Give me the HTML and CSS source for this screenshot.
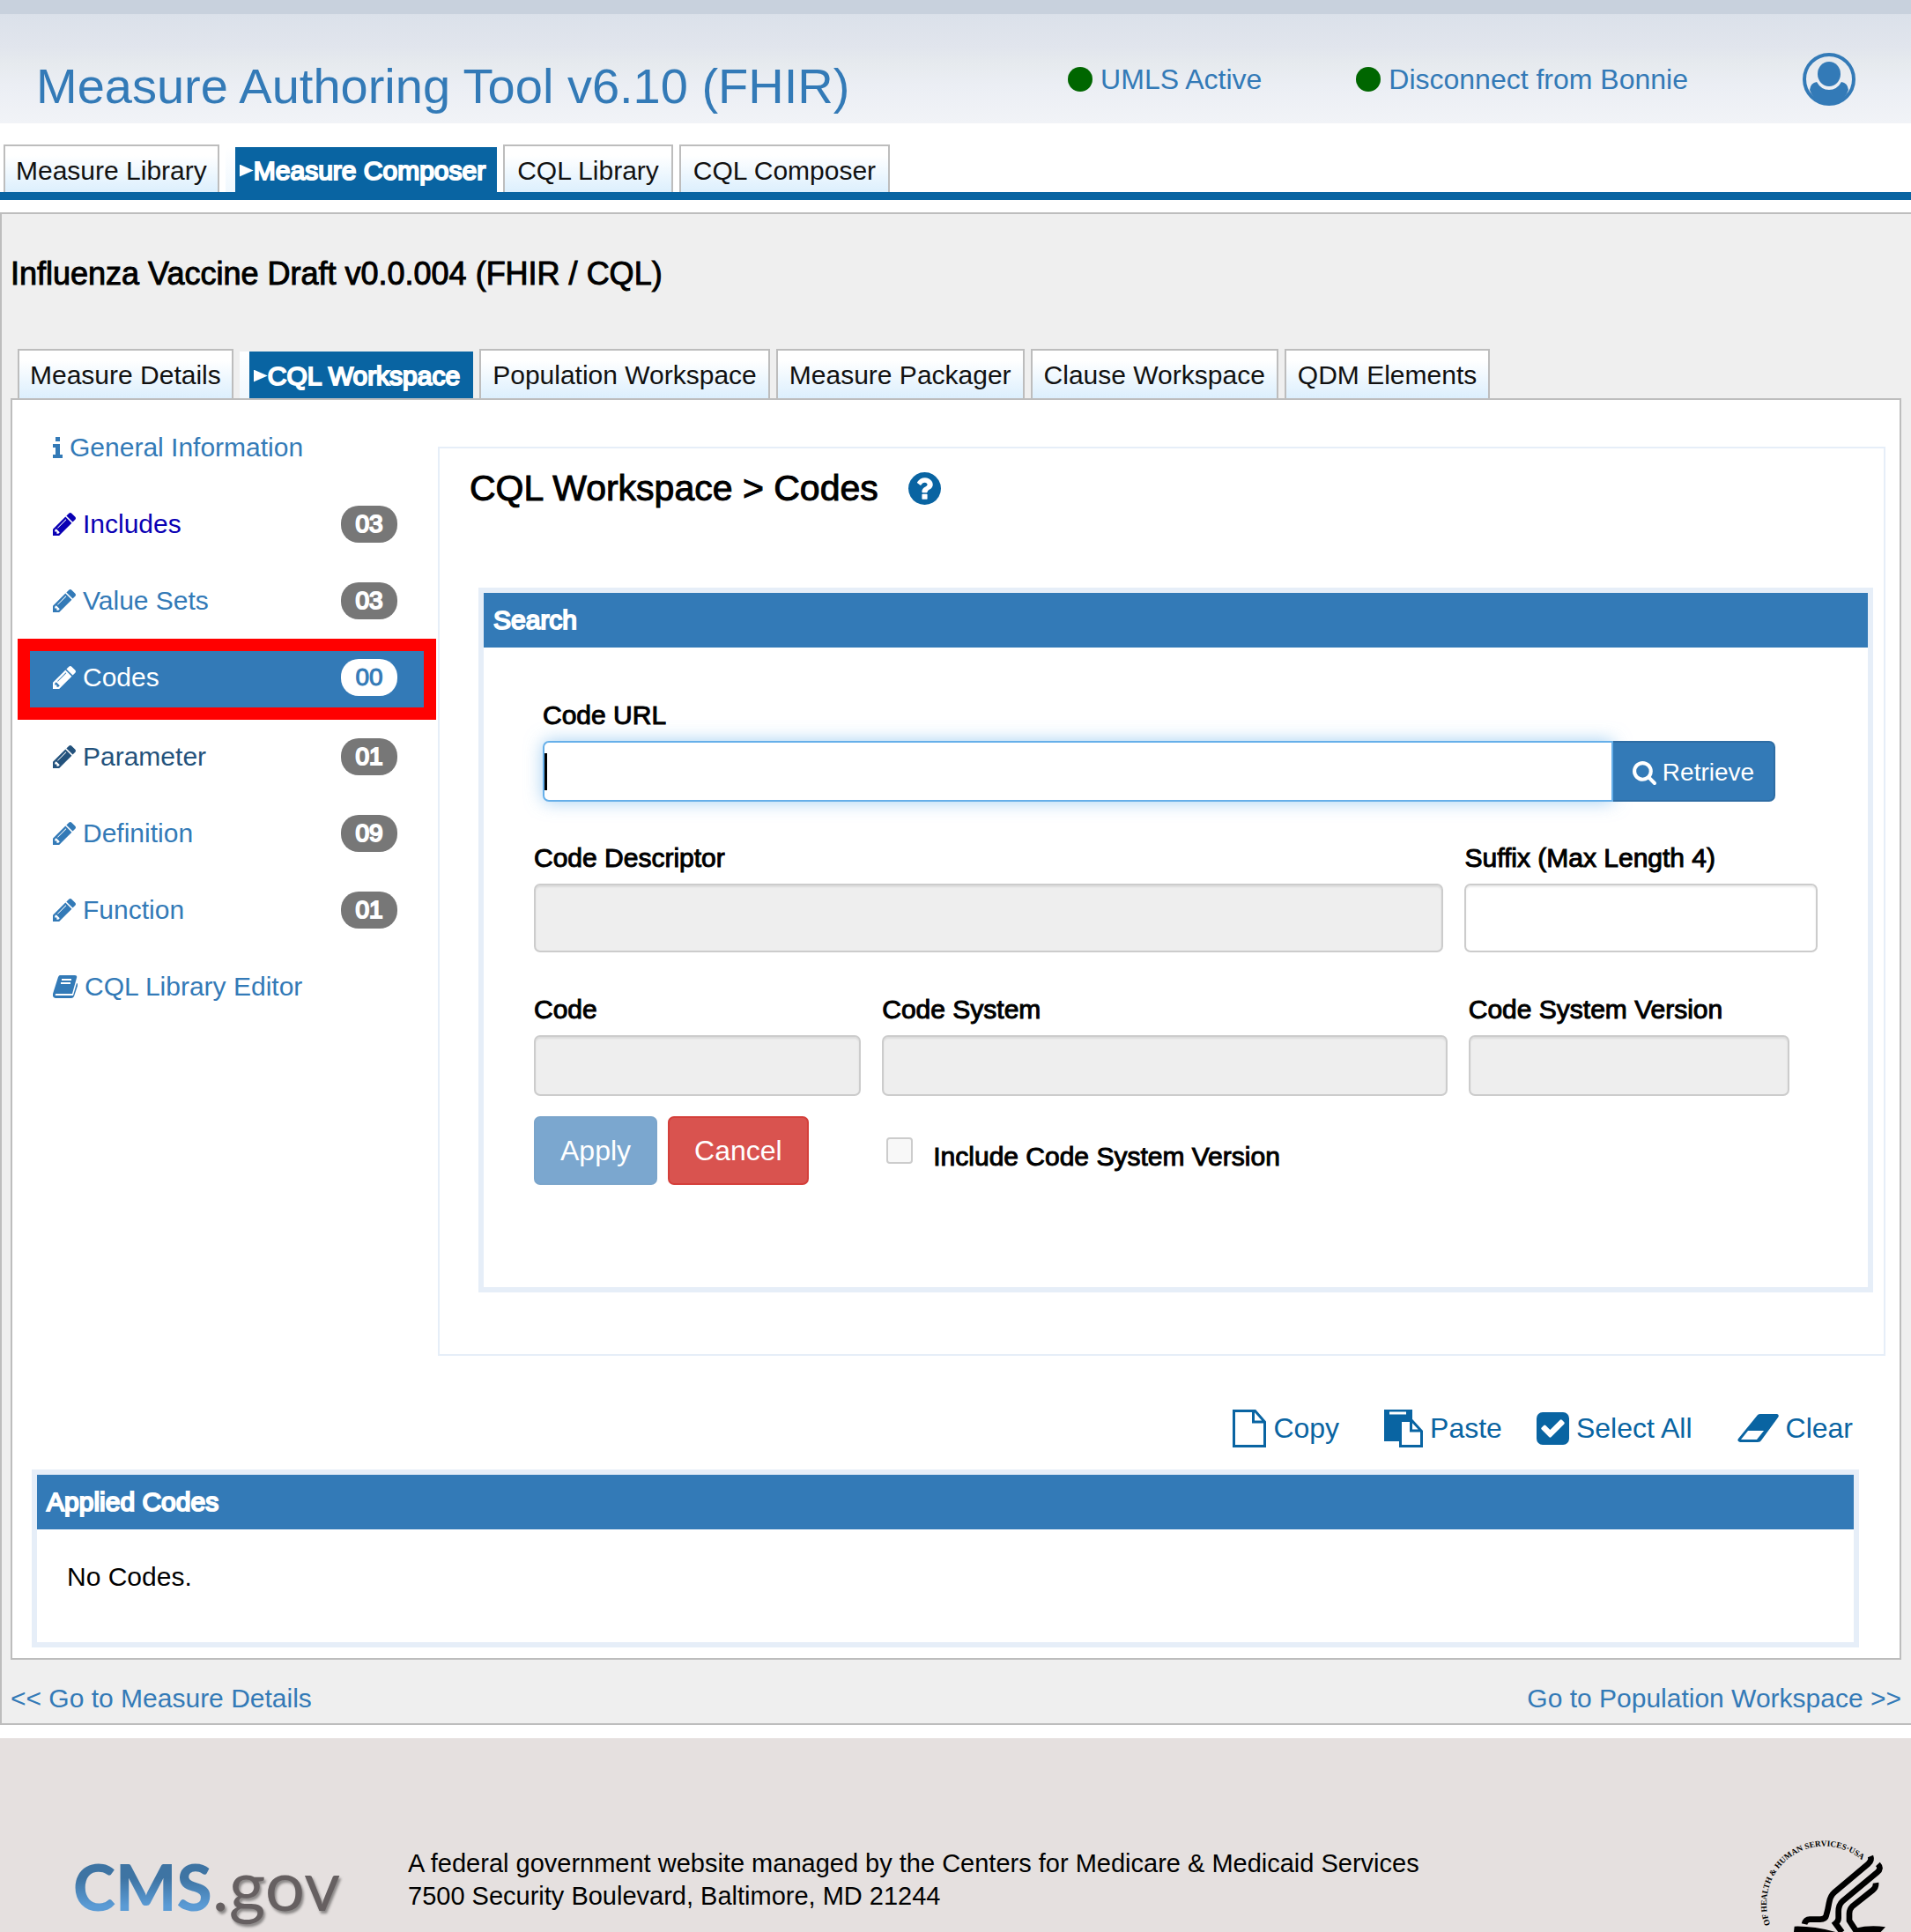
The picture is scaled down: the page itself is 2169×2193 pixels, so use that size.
FILE: index.html
```html
<!DOCTYPE html>
<html lang="en">
<head>
<meta charset="utf-8">
<title>Measure Authoring Tool</title>
<link rel="stylesheet" href="styles.css">
</head>
<body>
<svg class="sprite" aria-hidden="true">
  <symbol id="pencil" viewBox="128 149 1515 1515"><path d="M491 1536l91-91-235-235-91 91v107h128v128h107zm523-928q0-22-22-22-10 0-17 7l-542 542q-7 7-7 17 0 22 22 22 10 0 17-7l542-542q7-7 7-17zm-54-192l416 416-832 832h-416v-416zm683 96q0 53-37 90l-166 166-416-416 166-165q36-38 90-38 53 0 91 38l235 234q37 39 37 91z"/></symbol>
</svg>

<header class="header">
  <h1 class="header-title">Measure Authoring Tool v6.10 (FHIR)</h1>
  <nav class="header-links" aria-label="Account">
    <a class="status" href="#"><span class="dot"></span>UMLS Active</a>
    <a class="status" href="#"><span class="dot"></span>Disconnect from Bonnie</a>
  </nav>
  <a class="avatar" href="#" aria-label="Profile">
    <svg viewBox="0 0 60 60" width="60" height="60"><circle cx="30" cy="30" r="28" fill="none" stroke="currentColor" stroke-width="4"/><ellipse cx="30" cy="24" rx="13" ry="14" fill="currentColor"/><path d="M8 42q1-8 8-9 5 9 14 9t14-9q7 1 8 9-6 16-22 16T8 42z" fill="currentColor"/></svg>
  </a>
</header>

<nav class="tabs tabs-main" aria-label="Main">
  <a class="tab" href="#">Measure Library</a>
  <span class="tab-current"><a class="tab-active" href="#" aria-current="page">Measure Composer</a></span>
  <a class="tab" href="#">CQL Library</a>
  <a class="tab" href="#">CQL Composer</a>
</nav>

<main class="page">
  <h2 class="measure-name">Influenza Vaccine Draft v0.0.004 (FHIR / CQL)</h2>
  <nav class="tabs tabs-sub" aria-label="Measure">
    <a class="tab" href="#">Measure Details</a>
    <span class="tab-current"><a class="tab-active" href="#" aria-current="page">CQL Workspace</a></span>
    <a class="tab" href="#">Population Workspace</a>
    <a class="tab" href="#">Measure Packager</a>
    <a class="tab" href="#">Clause Workspace</a>
    <a class="tab" href="#">QDM Elements</a>
  </nav>

  <div class="workspace">
    <div class="columns">
      <ul class="side">
        <li><a class="side-link" href="#"><svg class="icon-info" viewBox="0 0 11 24" width="11" height="24"><path d="M3 0h5v5H3zM0 8h8v12h3v4H0v-4h3v-8H0z" fill="currentColor"/></svg>General Information</a></li>
        <li><a class="side-link side-link-blue" href="#"><svg class="icon"><use href="#pencil"/></svg>Includes<span class="badge">03</span></a></li>
        <li><a class="side-link" href="#"><svg class="icon"><use href="#pencil"/></svg>Value Sets<span class="badge">03</span></a></li>
        <li class="side-current"><a class="side-link" href="#" aria-current="true"><svg class="icon"><use href="#pencil"/></svg>Codes<span class="badge">00</span></a></li>
        <li><a class="side-link side-link-dark" href="#"><svg class="icon"><use href="#pencil"/></svg>Parameter<span class="badge">01</span></a></li>
        <li><a class="side-link" href="#"><svg class="icon"><use href="#pencil"/></svg>Definition<span class="badge">09</span></a></li>
        <li><a class="side-link" href="#"><svg class="icon"><use href="#pencil"/></svg>Function<span class="badge">01</span></a></li>
        <li><a class="side-link" href="#"><svg class="icon icon-book" viewBox="0 0 28 26"><path d="M8 0h17q3 0 2 3l-5 18H4q-2 0-1 2h20l4-14q2 1 1 3l-4 12q-1 2-3 2H3q-4-1-3-5L6 2q1-2 2-2z" fill="currentColor"/><path d="M10 5h11M9 9h11" stroke="#fff" stroke-width="2"/></svg>CQL Library Editor</a></li>
      </ul>

      <section class="content">
        <h3 class="content-title">CQL Workspace &gt; Codes
          <a class="help" href="#" aria-label="Help"><svg viewBox="128 128 1536 1536" width="37" height="37"><path fill="currentColor" d="M1024 1376v-192q0-14-9-23t-23-9h-192q-14 0-23 9t-9 23v192q0 14 9 23t23 9h192q14 0 23-9t9-23zm256-672q0-88-55.500-163t-138.500-116-170-41q-243 0-371 213-15 24 8 42l132 100q7 6 19 6 16 0 25-12 53-68 86-92 34-24 86-24 48 0 85.500 26t37.500 59q0 38-20 61t-68 45q-63 28-115.500 86.500t-52.500 125.500v36q0 14 9 23t23 9h192q14 0 23-9t9-23q0-19 21.500-49.500t54.500-49.500q32-18 49-28.500t46-35 44.500-48 28-60.500 12.500-81zm384 192q0 209-103 385.500t-279.500 279.500-385.500 103-385.500-103-279.500-279.500-103-385.500 103-385.500 279.500-279.500 385.500-103 385.500 103 279.500 279.500 103 385.500z"/></svg></a>
        </h3>
        <form class="box">
          <h4 class="box-title">Search</h4>
          <div class="form">
            <div class="field field-url">
              <label for="url">Code URL</label>
              <div class="input-group">
                <input class="input input-focus" id="url" type="text"><span class="caret"></span>
                <button class="retrieve" type="button"><svg viewBox="64 128 1664 1664" width="27" height="27"><path fill="currentColor" d="M1216 832q0-185-131.500-316.500t-316.500-131.500-316.500 131.500-131.500 316.500 131.500 316.500 316.500 131.500 316.500-131.500 131.500-316.500zm512 832q0 52-38 90t-90 38q-54 0-90-38l-343-342q-179 124-399 124-143 0-273.500-55.500t-225-150-150-225-55.500-273.500 55.500-273.500 150-225 225-150 273.500-55.500 273.500 55.500 225 150 150 225 55.500 273.500q0 220-124 399l343 343q37 37 37 90z"/></svg>Retrieve</button>
              </div>
            </div>
            <div class="row-descriptor">
              <div class="field"><label for="descriptor">Code Descriptor</label><input class="input input-tall" id="descriptor" type="text" disabled></div>
              <div class="field"><label for="suffix">Suffix (Max Length 4)</label><input class="input input-tall" id="suffix" type="text" maxlength="4"></div>
            </div>
            <div class="row-code">
              <div class="field"><label for="code">Code</label><input class="input" id="code" type="text" disabled></div>
              <div class="field"><label for="system">Code System</label><input class="input" id="system" type="text" disabled></div>
              <div class="field"><label for="version">Code System Version</label><input class="input" id="version" type="text" disabled></div>
              <div class="buttons">
                <button class="btn btn-apply" type="button" disabled>Apply</button>
                <button class="btn btn-cancel" type="button">Cancel</button>
              </div>
              <div class="check">
                <input class="checkbox" id="include" type="checkbox" disabled>
                <label for="include">Include Code System Version</label>
              </div>
            </div>
          </div>
        </form>
      </section>
    </div>

    <div class="tools">
      <a class="tool tool-wide" href="#"><svg viewBox="0 0 38 43" width="38" height="43"><path d="M1.500 1.500h24L36.500 14v27.500h-35zM23.500 1.500V14h13" fill="none" stroke="currentColor" stroke-width="3"/></svg>Copy</a>
      <a class="tool" href="#"><svg viewBox="0 0 44 43" width="44" height="43"><path d="M0 0h32v13l-2-2H17v25H0z" fill="currentColor"/><path d="M6 4h19" stroke="#fff" stroke-width="3"/><path d="M18.500 12.500h13l11 12v17h-24zM30.500 12.500V24h12" fill="#fff" stroke="currentColor" stroke-width="3"/></svg>Paste</a>
      <a class="tool tool-wide" href="#"><svg viewBox="128 128 1536 1536" width="37" height="37"><path fill="currentColor" d="M813 1299l614-614q19-19 19-45t-19-45l-102-102q-19-19-45-19t-45 19l-467 467-211-211q-19-19-45-19t-45 19l-102 102q-19 19-19 45t19 45l358 358q19 19 45 19t45-19zm851-883v960q0 119-84.500 203.500t-203.500 84.500h-960q-119 0-203.500-84.500t-84.500-203.500v-960q0-119 84.500-203.500t203.500-84.500h960q119 0 203.500 84.500t84.500 203.500z"/></svg>Select All</a>
      <a class="tool" href="#"><svg viewBox="0 0 47 32" width="47" height="32"><path fill="currentColor" fill-rule="evenodd" d="M23 1q1-1 3-1h19q3 1 1 4L27 30q-1 2-4 2H3q-4-1-2-4zM4 29h18l8-10H12z"/></svg>Clear</a>
    </div>

    <section class="box applied">
      <h4 class="box-title">Applied Codes</h4>
      <p class="empty">No Codes.</p>
    </section>
  </div>

  <nav class="pager" aria-label="Steps">
    <a href="#">&lt;&lt; Go to Measure Details</a>
    <a href="#">Go to Population Workspace &gt;&gt;</a>
  </nav>
</main>

<footer class="footer">
  <a class="logo" href="#"><span class="logo-cms">CMS</span><span class="logo-gov">.gov</span></a>
  <p class="address">A federal government website managed by the Centers for Medicare &amp; Medicaid Services<br>7500 Security Boulevard, Baltimore, MD 21244</p>
  <svg class="seal" viewBox="270 99 450 330" width="150" height="110" role="img" aria-label="Department of Health and Human Services">
    <path id="ring" d="M366 466A197 197 0 0 1 640 184" fill="none"/>
    <text class="seal-text" text-anchor="end"><textPath href="#ring" startOffset="100%">OF HEALTH &amp; HUMAN SERVICES·USA</textPath></text>
    <g fill="none" stroke="#000" stroke-width="20">
      <path d="M669 171q6 14-8 26L546 294q-14 12-18 36t-10 44q-3 12-20 12h-36q-14 0-18 16"/>
      <path d="M694 198q14 14-2 28L574 324q-14 12-14 36v22q0 10-10 18l22 30"/>
      <path d="M687 262q2 14-10 24l-70 56q-10 10-10 24v24l26 40"/>
    </g>
    <path d="M410 410q60-2 140 19H408zM618 416q50-12 102-4l-16 17h-80z"/>
  </svg>
</footer>
</body>
</html>
```
FILE: styles.css
```css
* { box-sizing: border-box; }

body {
  margin: 0;
  min-height: 100vh;
  display: flex;
  flex-direction: column;
  background: #fff;
  color: #000;
  font: 30px/40px "Liberation Sans", Arial, sans-serif;
}

h1, h2, h3, h4, p, ul { margin: 0; padding: 0; font-weight: normal; }
ul { list-style: none; }
a { color: #337ab7; text-decoration: none; }
svg { display: block; flex: none; }
input, button { font: inherit; margin: 0; }
.sprite { position: absolute; width: 0; height: 0; }

/* Header */
.header {
  display: flex;
  align-items: center;
  height: 140px;
  padding: 24px 63px 0 41px;
  border-top: 16px solid #c8d1dd;
  background: linear-gradient(#dbe1ea, #e1e5ed 30%, #e6eaee 45%, #ebeef4 65%, #f1f3f7);
}
.header-title {
  margin-right: auto;
  padding-top: 16px;
  color: #337ab7;
  font-size: 56px;
  line-height: 60px;
}
.header-links { display: flex; gap: 107px; margin-right: 130px; font-size: 32px; }
.status { display: flex; align-items: center; gap: 9px; }
.dot { width: 28px; height: 28px; border-radius: 50%; background: #060; }

/* Tabs */
.tabs { display: flex; gap: 7px; line-height: 34px; white-space: nowrap; }
.tabs-main { margin-top: 24px; padding-left: 4px; border-bottom: 9px solid #0964a2; }
.tab {
  padding: 11px 13px 7px;
  border: 2px solid #bdbdbd;
  border-bottom: 0;
  background: linear-gradient(#fff 20%, #dceffd);
  color: #111;
}
.tabs-main .tab { padding-left: 14px; padding-right: 14px; }
.tabs .tab:first-child { padding-left: 12px; padding-right: 12px; }
.tab-current { display: flex; padding-left: 11px; margin-top: 3px; background: linear-gradient(#fff, #f0f8fe); }
.tab-active {
  display: flex;
  align-items: center;
  padding: 2px 13px 0 5px;
  background: #0964a2;
  color: #fff;
  -webkit-text-stroke: 2px #fff;
}
.tab-active::before {
  content: "";
  width: 16px;
  height: 14px;
  background: #fff;
  clip-path: polygon(0 0, 100% 50%, 0 100%);
}
.tabs-sub { margin: 65px 0 0 8px; }
.tabs-sub .tab { padding-bottom: 9px; }
.tabs-sub .tab-active { padding-right: 15px; }

/* Page body */
.page {
  margin-top: 14px;
  padding: 48px 11px 8px 10px;
  border: solid #bdbdbd;
  border-width: 2px 0 2px 2px;
  background: #efefef;
}
.measure-name { font-size: 36px; line-height: 40px; -webkit-text-stroke: 1px #000; }
.workspace { padding-bottom: 12px; border: 2px solid #bdbdbd; background: #fff; }
.columns { display: flex; align-items: flex-start; gap: 2px; padding: 10px 16px 0 6px; }

/* Side navigation */
.side { flex: none; width: 475px; }
.side-link { display: flex; align-items: center; gap: 8px; height: 87px; padding: 0 44px 0 40px; }
.side-link-blue { color: #0a00b4; }
.side-link-dark { color: #23527c; }
.icon { width: 26px; height: 26px; fill: currentColor; }
.icon-book { width: 28px; }
.badge {
  margin-left: auto;
  width: 64px;
  border-radius: 20px;
  background: #777;
  color: #fff;
  font-size: 28px;
  line-height: 42px;
  text-align: center;
  -webkit-text-stroke: 2px #fff;
}
.side-current { margin-bottom: -2px; }
.side-current .side-link {
  height: 92px;
  padding: 0 30px 4px 26px;
  border: 14px solid #f00;
  background: #337ab7;
  color: #fff;
}
.side-current .badge { background: #fff; color: #337ab7; -webkit-text-stroke: 1px #337ab7; }

/* Content */
.content { flex: 1; margin-top: 43px; padding: 22px 12px 70px 44px; border: 2px solid #e6eef8; }
.content-title {
  display: flex;
  align-items: center;
  gap: 34px;
  margin: 0 0 90px -10px;
  font-size: 41px;
  line-height: 46px;
  -webkit-text-stroke: 1px #000;
}
.help { color: #0964a2; }
.box { border: 6px solid #e6eef8; background: #fff; }
.box-title { padding: 11px; background: #337ab7; color: #fff; -webkit-text-stroke: 2px #fff; }

/* Form */
.form { padding: 57px 57px 116px 57px; }
.field { display: flex; flex-direction: column; min-width: 0; }
label { -webkit-text-stroke: 1px #000; }
.field label { margin-bottom: 9px; }
.field-url { margin: 0 48px 0 10px; }
.input-group { position: relative; display: flex; }
.input {
  width: 100%;
  height: 69px;
  padding: 0 16px;
  border: 2px solid #ccc;
  border-radius: 7px;
  background: #fff;
  box-shadow: inset 0 2px 2px rgba(0, 0, 0, 0.08);
}
.input:disabled { background: #eee; }
.input-tall { height: 78px; }
.input-focus {
  flex: 1;
  border-color: #66afe9;
  border-radius: 7px 0 0 7px;
  box-shadow: 0 0 20px rgba(102, 175, 233, 0.6);
}
.caret { position: absolute; left: 2px; top: 14px; width: 3px; height: 42px; background: #000; }
.retrieve {
  position: relative;
  display: flex;
  align-items: center;
  justify-content: center;
  gap: 7px;
  width: 184px;
  padding-top: 4px;
  border: 2px solid #2e6da4;
  border-left: 0;
  border-radius: 0 7px 7px 0;
  background: #337ab7;
  color: #fff;
  font-size: 28px;
}
.row-descriptor { display: grid; grid-template-columns: 1031fr 400fr; gap: 24px; margin-top: 44px; }
.row-code {
  display: grid;
  grid-template-columns: 371fr 641fr 364fr;
  gap: 23px 24px;
  margin: 45px 32px 0 0;
}
.buttons { display: flex; gap: 12px; }
.btn { height: 78px; padding: 0 28px; border: 2px solid #d43f3a; border-radius: 7px; color: #fff; font-size: 32px; }
.btn-apply { border-color: #7ba5cb; background: #7ba7cf; }
.btn-cancel { background: #d9534f; }
.check { grid-column: span 2; display: flex; align-items: center; gap: 23px; margin-left: 5px; }
.check label { padding-top: 14px; }
.checkbox { appearance: none; width: 30px; height: 30px; border: 2px solid #ccc; border-radius: 4px; background: #f8f8f8; }

/* Applied codes */
.tools { display: flex; justify-content: flex-end; gap: 39px; margin: 60px 53px 25px 0; font-size: 32px; }
.tool { display: flex; align-items: center; gap: 8px; height: 44px; color: #0964a2; }
.tool-wide { margin-right: 12px; }
.applied { margin: 0 46px 0 22px; }
.empty { padding: 34px 34px 54px; }
.pager { display: flex; justify-content: space-between; margin-top: 24px; }

/* Footer */
.footer { display: flex; align-items: flex-start; flex: 1; margin-top: 15px; padding: 110px 29px 0 83px; background: #e5e0df; }
.logo { display: flex; align-items: baseline; width: 380px; height: 100px; padding-top: 10px; font: 73px/90px Lato, sans-serif; }
.logo-cms {
  font-weight: 900;
  background: linear-gradient(#3e74a3 40%, #5b9bd5 75%);
  background-clip: text;
  color: transparent;
}
.logo-gov { color: #666061; font-size: 80px; text-shadow: 2px 3px 3px rgba(0, 0, 0, 0.4); }
.address { margin-top: 14px; font-size: 29px; line-height: 37px; }
.seal { margin-left: auto; }
.seal-text { font: bold 28px "Liberation Serif", serif; }
```
